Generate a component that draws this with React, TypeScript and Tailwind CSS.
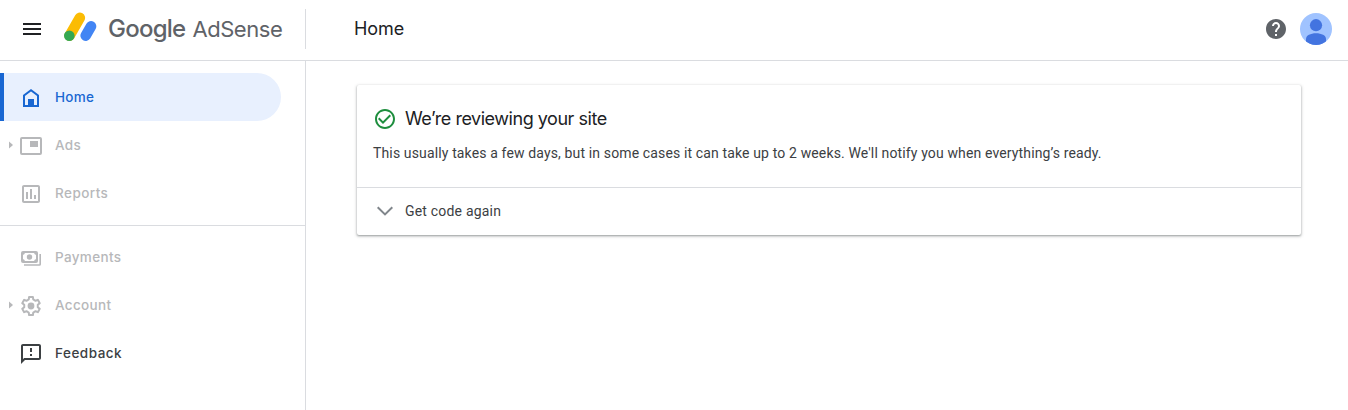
import type { ReactNode } from "react";
import { MdMenu, MdHelp, MdOutlineAssessment, MdOutlineFeedback, MdCheckCircleOutline } from "react-icons/md";

const HomeIcon = () => (
  <svg width="24" height="24" viewBox="0 0 24 24" fill="none">
    <path d="M5 20V9.5L12 4.2L19 9.5V20Z" stroke="currentColor" strokeWidth="2" />
    <path d="M9 13h6v6H9z" fill="currentColor" />
  </svg>
);

const AdsIcon = () => (
  <svg width="24" height="24" viewBox="0 0 24 24" fill="none">
    <rect x="2" y="4" width="20" height="16" rx="1" stroke="currentColor" strokeWidth="2" />
    <path d="M11 7h8v6h-8z" fill="currentColor" />
  </svg>
);

const PaymentsIcon = () => (
  <svg width="24" height="24" viewBox="0 0 24 24" fill="none">
    <rect x="3" y="6" width="15" height="10" rx="1" stroke="currentColor" strokeWidth="2" />
    <path d="M3 9V6h3a3 3 0 0 1-3 3ZM18 9V6h-3a3 3 0 0 0 3 3ZM3 13v3h3a3 3 0 0 0-3-3ZM18 13v3h-3a3 3 0 0 1 3-3Z" fill="currentColor" />
    <circle cx="10.500" cy="11" r="2.700" fill="currentColor" />
    <path d="M21.200 8v10.200a.8.8 0 0 1-.8.8H5" stroke="currentColor" strokeWidth="1.600" />
  </svg>
);

// Six teeth, each described by base and tip corners in polar coordinates.
const gearPoints = [0, 60, 120, 180, 240, 300]
  .flatMap((tooth) => [[-19, 6.9], [-12, 9.2], [12, 9.2], [19, 6.9]].map(([offset, radius]) => {
    const angle = ((tooth + offset - 90) * Math.PI) / 180;
    return `${(12 + radius * Math.cos(angle)).toFixed(2)},${(12 + radius * Math.sin(angle)).toFixed(2)}`;
  }))
  .join(" ");

const AccountIcon = () => (
  <svg width="24" height="24" viewBox="0 0 24 24" fill="none">
    <polygon points={gearPoints} stroke="currentColor" strokeWidth="2" strokeLinejoin="round" />
    <circle cx="12" cy="12" r="3.400" fill="currentColor" />
  </svg>
);

const Logo = () => (
  <svg width="34" height="30" viewBox="0 0 34 30" className="shrink-0" fill="none">
    <path d="M5.600 23.600L15.800 5.900" stroke="#fbbc04" strokeWidth="10.600" strokeLinecap="round" />
    <path d="M21.700 23.600L27 14.400" stroke="#4285f4" strokeWidth="10.600" strokeLinecap="round" />
    <circle cx="5.300" cy="23.700" r="5.300" fill="#34a853" />
  </svg>
);

type ItemProps = { icon: ReactNode; label: string; tracking: string; tone?: string; expandable?: boolean };

const NavItem = ({ icon, label, tracking, tone = "text-[#b7b8ba]", expandable }: ItemProps) => (
  <a className={`flex h-12 items-center ${tone}`}>
    <span className="flex w-[19px] shrink-0 justify-center pl-[3px]">
      {expandable && (
        <svg width="4" height="8" viewBox="0 0 4 8">
          <path d="M0 0.500L4 4L0 7.500Z" fill="currentColor" />
        </svg>
      )}
    </span>
    <span className="mt-0.5 w-9 shrink-0">{icon}</span>
    <span className={`font-['Inter',sans-serif] text-[13.500px] font-medium leading-5 ${tracking}`}>{label}</span>
  </a>
);

export default function App() {
  return (
    <div className="flex h-[410px] w-full flex-col overflow-hidden bg-white font-['Roboto',sans-serif] text-[#3c4043]">
      <header className="flex h-[61px] shrink-0 border-b border-[#dadce0]">
        <div className="mt-[9px] flex h-10 w-[306px] shrink-0 items-center border-r border-[#dadce0] pl-5">
          <MdMenu size={24} color="#202124" />
          <div className="ml-5 flex items-center">
            <div className="-mt-1"><Logo /></div>
            <div className="ml-2.5 flex items-baseline gap-[7px] whitespace-nowrap font-['Inter',sans-serif] leading-7 text-[#5f6368]">
              <span className="text-[24px] font-medium tracking-[-0.75px]">Google</span>
              <span className="text-[22px] tracking-[-0.45px]">AdSense</span>
            </div>
          </div>
        </div>
        <div className="flex flex-1 items-center justify-between pb-[3px] pl-12 pr-4">
          <h1 className="font-['Inter',sans-serif] text-[18px] leading-6 tracking-[-0.1px] text-[#202124]">Home</h1>
          <div className="flex items-center gap-3">
            <MdHelp size={24} color="#5f6368" />
            <svg width="32" height="32" viewBox="0 0 32 32">
              <defs><clipPath id="avatar"><circle cx="16" cy="16" r="16" /></clipPath></defs>
              <g clipPath="url(#avatar)">
                <path d="M0 0h32v32H0z" fill="#a0c3ff" />
                <circle cx="16" cy="12.200" r="6.100" fill="#4374e0" />
                <path d="M6 32V26C6 22.500 10.500 20.300 16 20.300S26 22.500 26 26V32Z" fill="#4374e0" />
              </g>
            </svg>
          </div>
        </div>
      </header>
      <div className="flex min-h-0 flex-1">
        <nav className="w-[306px] shrink-0 border-r border-[#dadce0] pt-3">
          <div className="mr-6 rounded-r-full bg-[#e8f0fe]">
            <div className="border-l-4 border-[#1967d2] [&>a]:-ml-1">
              <NavItem icon={<HomeIcon />} label="Home" tone="text-[#1967d2]" tracking="tracking-[0.3px]" />
            </div>
          </div>
          <NavItem icon={<AdsIcon />} label="Ads" expandable tracking="tracking-[0.4px]" />
          <NavItem icon={<MdOutlineAssessment size={24} />} label="Reports" tracking="tracking-[0.45px]" />
          <div className="mb-[7px] mt-2 h-px bg-[#dadce0]" />
          <NavItem icon={<PaymentsIcon />} label="Payments" tracking="tracking-[0.35px]" />
          <NavItem icon={<AccountIcon />} label="Account" expandable tracking="tracking-[0.35px]" />
          <NavItem icon={<MdOutlineFeedback size={24} />} label="Feedback" tone="text-[#3c4043]" tracking="tracking-[0.5px]" />
        </nav>
        <main className="flex-1 pl-[51px] pr-[47px] pt-6">
          <section className="h-[150px] rounded-[2px] bg-white shadow-[0_1px_2px_0_rgba(60,64,67,0.4),0_1px_3px_1px_rgba(60,64,67,0.15)]">
            <div className="h-[103px] border-b border-[#dadce0] px-4 pt-[22px]">
              <div className="flex items-center gap-2">
                <MdCheckCircleOutline size={24} color="#1e8e3e" />
                <h2 className="font-['Inter',sans-serif] text-[18px] leading-6 tracking-[-0.47px] text-[#202124]">We’re reviewing your site</h2>
              </div>
              <p className="mt-3 whitespace-nowrap text-sm leading-5 tracking-[0.137px]">This usually takes a few days, but in some cases it can take up to 2 weeks. We'll notify you when everything’s ready.</p>
            </div>
            <button className="flex h-[46px] items-center gap-2 pl-4 text-sm tracking-[0.2px]">
              <svg width="24" height="24" viewBox="0 0 24 24" fill="none">
                <path d="M4.700 8.200L12 15.400L19.300 8.200" stroke="#80868b" strokeWidth="2" />
              </svg>
              Get code again
            </button>
          </section>
        </main>
      </div>
    </div>
  );
}
